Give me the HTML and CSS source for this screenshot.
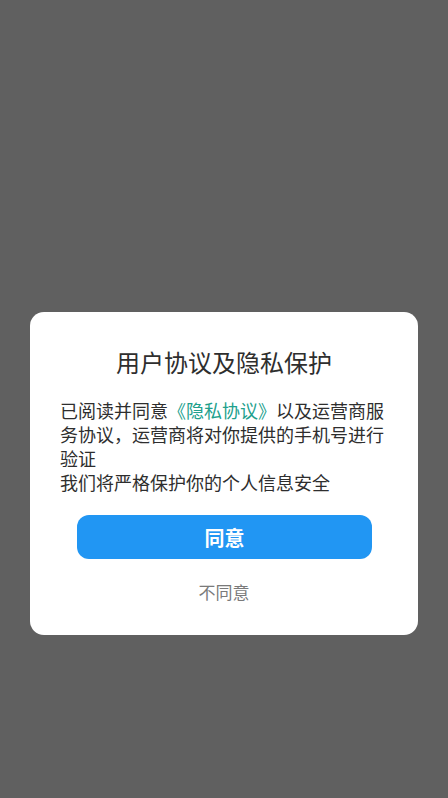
FILE: index.html
```html
<!DOCTYPE html>
<html lang="zh-CN">
<head>
<meta charset="utf-8">
<meta name="viewport" content="width=device-width, initial-scale=1">
<title>用户协议及隐私保护</title>
<link rel="stylesheet" href="styles.css">
</head>
<body>
<div class="overlay">
  <div class="dialog">
    <h1 class="title">用户协议及隐私保护</h1>
    <p class="content"><span>已阅读并同意</span><span class="link">《隐私协议》</span><span>以及运营商服务协议，运营商将对你提供的手机号进行验证</span><br><span>我们将严格保护你的个人信息安全</span></p>
    <button class="btn-agree">同意</button>
    <div class="btn-disagree">不同意</div>
  </div>
</div>
</body>
</html>
```
FILE: styles.css
```css
html, body {
  margin: 0;
  padding: 0;
}
body {
  width: 448px;
  height: 798px;
  background: #606060;
  font-family: "Noto Sans CJK SC", "Noto Sans", sans-serif;
  overflow: hidden;
}
.overlay {
  padding-top: 312px;
  padding-left: 30px;
}
.dialog {
  width: 388px;
  height: 323px;
  box-sizing: border-box;
  background: #ffffff;
  border-radius: 14px;
  padding: 33px 30px 0;
  display: flex;
  flex-direction: column;
}
.title {
  margin: 0;
  font-size: 24px;
  line-height: 34px;
  font-weight: 400;
  color: #2e2e2e;
  text-align: center;
}
.content {
  margin: 19px 0 0;
  font-size: 18px;
  line-height: 24px;
  color: #2e2e2e;
}
.link {
  color: #21a08c;
}
.btn-agree {
  margin: 21px 16px 0 17px;
  height: 44px;
  border: none;
  border-radius: 12px;
  background: #2196f3;
  color: #ffffff;
  font-family: inherit;
  font-size: 20px;
  font-weight: 700;
  padding: 0;
}
.btn-disagree {
  margin-top: 21px;
  text-align: center;
  font-size: 17px;
  line-height: 24px;
  color: #7a7a7a;
}
```
